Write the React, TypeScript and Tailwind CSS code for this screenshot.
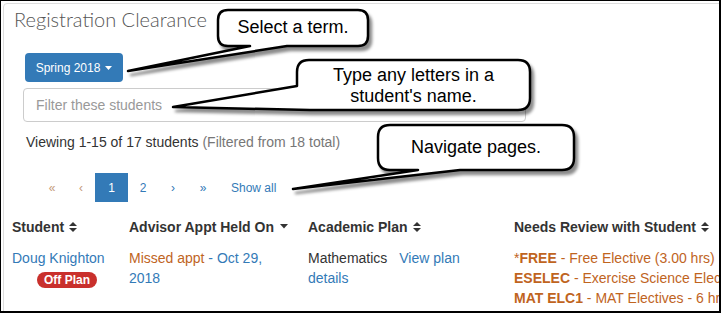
const blue = 'text-[#337ab7]'

function SortIcon() {
    return (
        <svg width="8" height="12" viewBox="0 0 8 12" className="inline-block ml-[5px] -mt-[2px]">
            <path d="M0 5 L4 1 L8 5 Z M0 7 L8 7 L4 11 Z" fill="#333" />
        </svg>
    )
}

function CaretDown() {
    return (
        <svg width="8" height="5" viewBox="0 0 8 5" className="inline-block ml-[6px] mb-[3px]">
            <path d="M0 0 L8 0 L4 4.5 Z" fill="#333" />
        </svg>
    )
}

// speech bubble outlines: rounded box with a thin wedge pointing at the element
const bubbles = [
    'M228 10 H358 Q368 10 368 20 V36 Q368 46 358 46 H287 L128 71 L250 46 H228 Q218 46 218 36 V20 Q218 10 228 10 Z',
    'M309 60 H518 Q530 60 530 72 V98 Q530 110 518 110 H310 L173 107 L297 86 V72 Q297 60 309 60 Z',
    'M390 125 H562 Q574 125 574 137 V158 Q574 170 562 170 H460 L293 189 L418 170 H390 Q378 170 378 158 V137 Q378 125 390 125 Z',
]

function Callouts() {
    return (
        <>
            <svg width="721" height="313" className="absolute left-0 top-0 pointer-events-none">
                <defs>
                    <filter id="sh" x="-10%" y="-10%" width="130%" height="140%">
                        <feDropShadow dx="3" dy="4" stdDeviation="1.4" floodColor="#000" floodOpacity="0.45" />
                    </filter>
                </defs>
                {bubbles.map((d, i) => (
                    <path key={i} d={d} fill="#fff" stroke="#000" strokeWidth="2.5" strokeLinejoin="round" filter="url(#sh)" />
                ))}
            </svg>
            <div className="absolute left-[218px] top-[16px] w-[150px] text-center text-[18px] leading-[22px] text-black font-['Liberation_Sans',sans-serif]">
                Select a term.
            </div>
            <div className="absolute left-[297px] top-[65px] w-[233px] text-center text-[18px] leading-[21px] text-black font-['Liberation_Sans',sans-serif]">
                Type any letters in a<br />student's name.
            </div>
            <div className="absolute left-[378px] top-[136px] w-[196px] text-center text-[18px] leading-[22px] text-black font-['Liberation_Sans',sans-serif]">
                Navigate pages.
            </div>
        </>
    )
}

export default function App() {
    return (
        <div className="relative w-[721px] h-[313px] overflow-hidden bg-white font-['Liberation_Sans',Arial,sans-serif]">
            <div className="w-[721px] h-[313px] overflow-hidden border-t border-l border-r-2 border-b-2 border-black">
                <div className="ml-[2px] mt-[2px] w-[800px] h-[400px] border border-[#dddddd] rounded-[4px]">
                    <h1 className="ml-[10px] mt-[3px] text-[20px] leading-[24px] font-light text-[#555] font-['Lato',sans-serif]">
                        Registration Clearance
                    </h1>

                    <button type="button" className="ml-[21px] mt-[22px] h-[29px] w-[98px] rounded-[4px] bg-[#337ab7] text-[12px] text-white flex items-center justify-center">
                        Spring 2018
                        <svg width="7" height="4" viewBox="0 0 7 4" className="ml-[5px]">
                            <path d="M0 0 L7 0 L3.5 4 Z" fill="#fff" />
                        </svg>
                    </button>

                    <div className="ml-[19px] mt-[6px] h-[34px] w-[503px] rounded-[4px] border border-[#cccccc] flex items-center pl-[12px] text-[14px] text-[#999]">
                        Filter these students
                    </div>

                    <div className="ml-[22px] mt-[10px] text-[14px] leading-[20px] text-[#333]">
                        Viewing 1-15 of 17 students <span className="text-[#777]">(Filtered from 18 total)</span>
                    </div>

                    <ul className="ml-[33px] mt-[21px] flex h-[29px] items-center text-[12px]">
                        <li className="w-[30px] text-center text-[#c49a7a]">«</li>
                        <li className="w-[28px] text-center text-[#c49a7a]">‹</li>
                        <li className="w-[33px] h-[29px] flex items-center justify-center bg-[#337ab7] text-white">1</li>
                        <li className={`w-[30px] text-center ${blue}`}>2</li>
                        <li className={`w-[30px] text-center ${blue}`}>›</li>
                        <li className={`w-[30px] text-center ${blue}`}>»</li>
                        <li className={`pl-[13px] ${blue}`}>Show all</li>
                    </ul>

                    <table className="mt-[7px] text-[14px] leading-[20px] text-[#333] table-fixed border-collapse">
                        <thead>
                            <tr className="font-bold text-left">
                                <th className="w-[117px] px-[8px] py-[8px]">Student<SortIcon /></th>
                                <th className="w-[179px] px-[8px] py-[8px]">Advisor Appt Held On<CaretDown /></th>
                                <th className="w-[206px] px-[8px] py-[8px]">Academic Plan<SortIcon /></th>
                                <th className="w-[290px] px-[8px] py-[8px]">Needs Review with Student<SortIcon /></th>
                            </tr>
                        </thead>
                        <tbody>
                            <tr className="align-top">
                                <td className="px-[8px] pt-[3px]">
                                    <div className={blue}>Doug Knighton</div>
                                    <span className="mt-[4px] ml-[25px] inline-flex h-[16px] w-[60px] items-center justify-center rounded-full bg-[#c9302c] text-[12px] font-bold text-white">
                                        Off Plan
                                    </span>
                                </td>
                                <td className="px-[8px] pt-[3px]">
                                    <span className="text-[#c0641e]">Missed appt</span>
                                    <span className={blue}> - Oct 29,<br />2018</span>
                                </td>
                                <td className="px-[8px] pt-[3px]">
                                    Mathematics <span className={`ml-[8px] ${blue}`}>View plan<br />details</span>
                                </td>
                                <td className="px-[8px] pt-[3px] whitespace-nowrap text-[#c0641e]">
                                    <div>*<b>FREE</b> - Free Elective (3.00 hrs)</div>
                                    <div><b>ESELEC</b> - Exercise Science Electives</div>
                                    <div><b>MAT ELC1</b> - MAT Electives - 6 hrs</div>
                                </td>
                            </tr>
                        </tbody>
                    </table>
                </div>
            </div>
            <Callouts />
        </div>
    )
}
